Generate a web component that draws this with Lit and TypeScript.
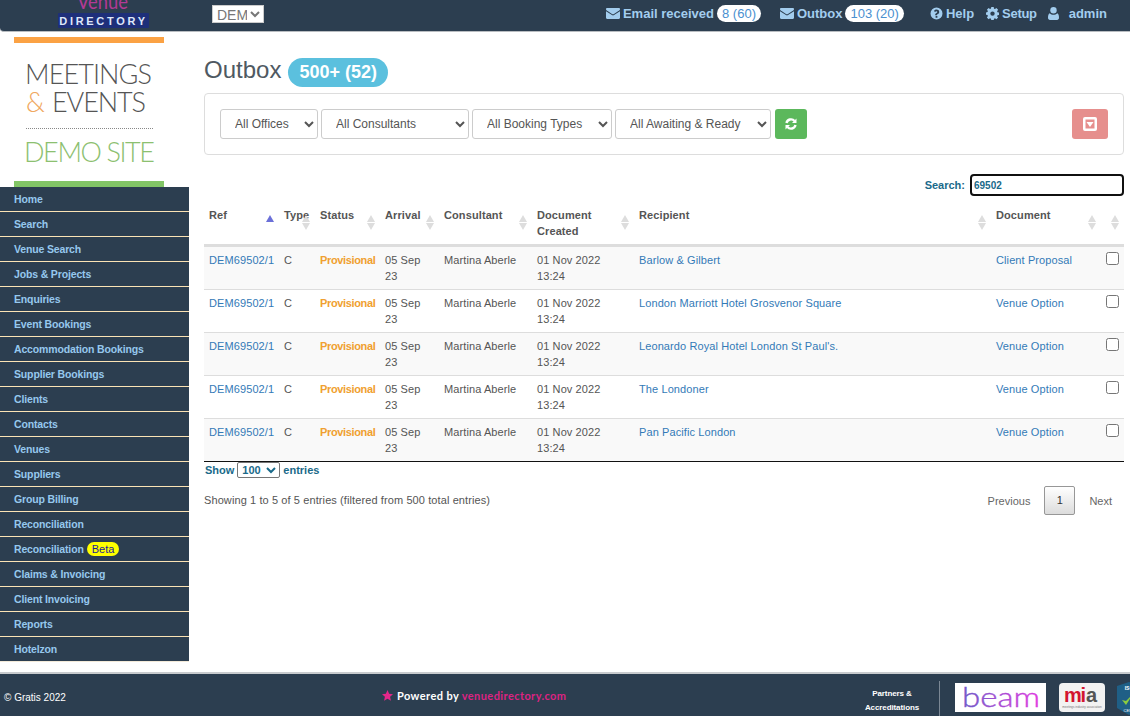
import { LitElement, html, css, svg } from 'lit';
import { customElement } from 'lit/decorators.js';

const NAV = [
  'Home',
  'Search',
  'Venue Search',
  'Jobs & Projects',
  'Enquiries',
  'Event Bookings',
  'Accommodation Bookings',
  'Supplier Bookings',
  'Clients',
  'Contacts',
  'Venues',
  'Suppliers',
  'Group Billing',
  'Reconciliation',
  'Reconciliation|Beta',
  'Claims & Invoicing',
  'Client Invoicing',
  'Reports',
  'Hotelzon',
];

const ROWS = [
  ['Barlow & Gilbert', 'Client Proposal'],
  ['London Marriott Hotel Grosvenor Square', 'Venue Option'],
  ["Leonardo Royal Hotel London St Paul's.", 'Venue Option'],
  ['The Londoner', 'Venue Option'],
  ['Pan Pacific London', 'Venue Option'],
];

const envelope = html`<svg class="ico ico--env" viewBox="0 0 14 11">
  <path d="M0 1.2C0 .5.5 0 1.2 0h11.6c.7 0 1.2.5 1.2 1.2 0 .5-.3 1-.8 1.4L7.6 6.2c-.4.2-.8.2-1.2 0L.8 2.6C.3 2.2 0 1.700 0 1.2z" />
  <path d="M0 3.2l6 3.9c.6.4 1.4.4 2 0l6-3.9v6.6c0 .7-.5 1.2-1.2 1.2H1.2C.5 11 0 10.500 0 9.800z" />
</svg>`;

const gear = svg`<path fill-rule="evenodd" d="M5.300 0h2.400l.3 1.700 1 .4L10.400 1.100l1.700 1.700-1 1.400.4 1 1.500.3v2.400l-1.500.3-.4 1 1 1.400-1.700 1.700-1.400-1-1 .4-.3 1.700H5.300l-.3-1.700-1-.4-1.400 1L.9 10.500l1-1.400-.4-1L0 7.800V5.400l1.500-.3.400-1-1-1.400 1.700-1.700 1.400 1 1-.4zM6.500 4.400a2.200 2.200 0 1 0 0 4.400 2.200 2.200 0 0 0 0-4.400z" />`;

@customElement('app-root')
export class AppRoot extends LitElement {
  static styles = css`
    :host {
      display: flex;
      flex-direction: column;
      height: 716px;
      overflow: hidden;
      background: #fff;
      color: #555;
      font-family: 'Liberation Sans', Arial, sans-serif;
      font-size: 11px;
    }

    a {
      color: #337ab7;
      text-decoration: none;
    }

    .top {
      flex: none;
      display: flex;
      align-items: center;
      height: 31px;
      background: #2c3e50;
      border-bottom: 1px solid #b9bdc1;
      border-bottom-left-radius: 4px;
      overflow: hidden;
    }

    .top__logo {
      display: block;
      width: 100px;
      height: 31px;
      margin-left: 55px;
    }

    .top__select {
      margin-left: 57px;
      width: 52px;
      height: 18px;
      padding: 0;
      margin-top: -3px;
      border: 1px solid #ccc;
      border-radius: 0;
      background: #fff;
      color: #777;
      font: 14px 'Liberation Sans', Arial, sans-serif;
    }

    .top__nav {
      display: flex;
      align-items: center;
      margin-left: auto;
      margin-right: 23px;
      margin-top: -4px;
      color: #a3cdee;
      font-size: 13px;
      font-weight: bold;
    }

    .top__item {
      display: flex;
      align-items: center;
      gap: 3px;
    }

    .top__item--mail {
      margin-right: 19px;
    }

    .top__item--help {
      margin-left: 26px;
      margin-right: 12px;
    }

    .top__item--setup {
      margin-right: 11px;
      letter-spacing: -0.3px;
    }

    .top__item--user {
      gap: 10px;
    }

    .top__count {
      padding: 0 5px;
      height: 17px;
      line-height: 17px;
      border-radius: 9px;
      background: #fff;
      color: #4a90d0;
      font-weight: normal;
      font-size: 13px;
    }

    .ico {
      display: block;
      fill: #a3cdee;
    }

    .ico--env {
      width: 14px;
      height: 11px;
    }

    .ico--small {
      width: 13px;
      height: 13px;
    }

    .ico--user {
      width: 11px;
      height: 13px;
    }

    .body {
      flex: 1;
      display: flex;
      min-height: 0;
    }

    .side {
      flex: none;
      width: 189px;
    }

    .side__logo {
      display: block;
      width: 150px;
      height: 150px;
      margin: 5px 0 0 14px;
    }

    .side__nav {
      display: flex;
      flex-direction: column;
      background: #2c3e50;
    }

    .side__link {
      display: flex;
      align-items: center;
      gap: 3px;
      height: 24px;
      padding-left: 14px;
      border-bottom: 1px solid #fbe3b5;
      color: #96c8ee;
      font-size: 10.5px;
      font-weight: bold;
      letter-spacing: -0.15px;
    }

    .side__link:last-child {
      border-bottom-color: #f3ead9;
    }

    .side__beta {
      padding: 0 5px;
      height: 14px;
      line-height: 14px;
      border-radius: 7px;
      background: #ff0;
      color: #1c1c9a;
      font-size: 11px;
      font-weight: normal;
      letter-spacing: 0;
    }

    .main {
      flex: 1;
      min-width: 0;
      padding: 0 6px 0 15px;
    }

    .title {
      display: flex;
      align-items: flex-start;
      gap: 7px;
      height: 29px;
      margin: 26px 0 6px 0;
      color: #4f5962;
      font-size: 24px;
      line-height: 24px;
      font-weight: normal;
    }

    .title__badge {
      padding: 0 11px;
      height: 29px;
      line-height: 29px;
      border-radius: 15px;
      background: #5bc0de;
      color: #fff;
      font-size: 18px;
      font-weight: bold;
    }

    .filters {
      display: flex;
      align-items: center;
      gap: 3px;
      height: 60px;
      padding: 0 15px;
      border: 1px solid #ddd;
      border-radius: 4px;
    }

    .filters__select {
      height: 30px;
      padding: 0 10px;
      border: 1px solid #ccc;
      border-radius: 3px;
      background: #fff;
      color: #555;
      font: 12px 'Liberation Sans', Arial, sans-serif;
    }

    .filters__select--offices {
      width: 98px;
    }

    .filters__select--consultants {
      width: 148px;
    }

    .filters__select--types {
      width: 140px;
    }

    .filters__select--ready {
      width: 156px;
    }

    .btn {
      display: flex;
      align-items: center;
      justify-content: center;
      height: 30px;
      border-radius: 3px;
    }

    .btn--go {
      width: 32px;
      margin-left: 1px;
      background: #5cb85c;
    }

    .btn--export {
      width: 36px;
      margin-left: auto;
      background: #e68f8d;
    }

    .search {
      display: flex;
      align-items: center;
      justify-content: flex-end;
      gap: 5px;
      margin-top: 19px;
      margin-bottom: 5px;
      color: #1a6a8a;
      font-weight: bold;
    }

    .search__input {
      box-sizing: border-box;
      width: 154px;
      height: 22px;
      padding: 0 2px;
      border: 2px solid #101010;
      border-radius: 4px;
      outline: none;
      color: #1a6a8a;
      font: bold 10px 'Liberation Sans', Arial, sans-serif;
    }

    .grid {
      width: 920px;
      table-layout: fixed;
      border-collapse: collapse;
      border-bottom: 1px solid #111;
      line-height: 16px;
    }

    .grid th {
      position: relative;
      box-sizing: border-box;
      height: 44px;
      padding: 6px 5px 5px 5px;
      border-bottom: 3px solid #ddd;
      text-align: left;
      vertical-align: top;
      font-weight: bold;
      letter-spacing: 0.1px;
    }

    .grid td {
      padding: 5px;
      border-bottom: 1px solid #ddd;
      vertical-align: top;
      letter-spacing: 0.1px;
    }

    .grid tr:last-child td {
      border-bottom: none;
    }

    .grid tbody tr:nth-child(odd) td {
      background: #f9f9f9;
    }

    .grid .provisional {
      color: #f0a030;
      font-weight: bold;
      letter-spacing: -0.35px;
    }

    .col-ref { width: 75px; }
    .col-type { width: 36px; }
    .col-status { width: 65px; }
    .col-arrival { width: 59px; }
    .col-consultant { width: 93px; }
    .col-created { width: 102px; }
    .col-recipient { width: 357px; }
    .col-document { width: 110px; }
    .col-check { width: 23px; }

    .sort {
      position: absolute;
      right: 5px;
      top: 14px;
      display: flex;
      flex-direction: column;
      gap: 1px;
    }

    .sort__up,
    .sort__down {
      width: 0;
      height: 0;
      border-left: 4.500px solid transparent;
      border-right: 4.500px solid transparent;
    }

    .sort__up {
      border-bottom: 7px solid #ddd;
    }

    .sort__down {
      border-top: 7px solid #ddd;
    }

    .sort--active .sort__up {
      border-bottom-color: #6b70d8;
    }

    .sort--active .sort__down {
      visibility: hidden;
    }

    .check {
      display: block;
      width: 13px;
      height: 13px;
      margin: 0;
      appearance: none;
      box-sizing: border-box;
      border: 1px solid #767676;
      border-radius: 2.500px;
      background: #fff;
    }

    .length {
      display: flex;
      align-items: center;
      gap: 3px;
      height: 16px;
      padding-left: 1px;
      color: #1a6a8a;
      font-weight: bold;
    }

    .length__select {
      width: 43px;
      height: 16px;
      padding: 0;
      border: 1px solid #767676;
      border-radius: 2px;
      background: #fff;
      color: #1a6a8a;
      font: bold 11px 'Liberation Sans', Arial, sans-serif;
    }

    .tail {
      display: flex;
      align-items: center;
      justify-content: space-between;
      margin-top: 8px;
      letter-spacing: 0.1px;
    }

    .tail__info {
      margin-top: -2px;
    }

    .tail__pages {
      display: flex;
      align-items: center;
      gap: 14px;
      margin-right: 12px;
      color: #666;
      letter-spacing: 0;
    }

    .tail__current {
      width: 31px;
      height: 29px;
      box-sizing: border-box;
      line-height: 27px;
      text-align: center;
      border: 1px solid #979797;
      border-radius: 2px;
      background: linear-gradient(#fff, #dcdcdc);
      color: #333;
    }

    .foot {
      flex: none;
      display: flex;
      align-items: center;
      height: 42px;
      background: #2c3e50;
      border-top: 2px solid #c8cbce;
      overflow: hidden;
      color: #fff;
    }

    .foot__copy {
      width: 382px;
      flex: none;
      box-sizing: border-box;
      padding-left: 4px;
      margin-top: 4px;
      font-size: 10px;
    }

    .foot__power {
      width: 466px;
      flex: none;
      display: flex;
      align-items: center;
      gap: 4px;
      font-family: 'Lato', sans-serif;
      font-size: 11px;
      font-weight: 700;
      letter-spacing: 0.42px;
    }

    .foot__brand {
      color: #dc2382;
    }

    .foot__star {
      display: block;
      width: 11px;
      height: 11px;
      fill: #e5278a;
    }

    .foot__partners {
      flex: none;
      width: 88px;
      margin: 12px 3px 0 0;
      text-align: center;
      font-size: 8px;
      line-height: 14px;
      font-weight: bold;
      letter-spacing: -0.1px;
    }

    .foot__rule {
      flex: none;
      align-self: stretch;
      width: 1px;
      margin-top: 7px;
      background: #7b8794;
    }

    .foot__beam {
      flex: none;
      display: block;
      width: 91px;
      height: 29px;
      margin: 5px 0 0 15px;
      background: #fff;
    }

    .foot__mia {
      flex: none;
      display: block;
      width: 46px;
      height: 29px;
      margin: 5px 0 0 13px;
      border-radius: 4px;
      background: #f2f2f2;
    }

    .foot__mark {
      flex: none;
      display: block;
      width: 24px;
      height: 36px;
      margin: 6px 0 0 12px;
    }
  `;

  renderTop() {
    return html`
      <header class="top">
        <svg class="top__logo" viewBox="0 0 100 31">
          <text x="47.500" y="9" text-anchor="middle" fill="#b23a94" font-family="Lato, sans-serif" font-size="22" textLength="51" lengthAdjust="spacingAndGlyphs">Venue</text>
          <rect x="3" y="13" width="91" height="15" rx="1" fill="#1e2f7a" />
          <text x="48.500" y="25" text-anchor="middle" fill="#dfe7fb" font-family="'Liberation Sans', sans-serif" font-size="11" font-weight="bold" letter-spacing="2.700">DIRECTORY</text>
        </svg>
        <select class="top__select"><option>DEM</option></select>
        <nav class="top__nav">
          <span class="top__item top__item--mail">
            ${envelope}Email received<span class="top__count">8 (60)</span>
          </span>
          <span class="top__item">
            ${envelope}Outbox<span class="top__count">103 (20)</span>
          </span>
          <span class="top__item top__item--help">
            <svg class="ico ico--small" viewBox="0 0 13 13">
              <path fill-rule="evenodd" d="M6.500.5a6 6 0 1 1 0 12 6 6 0 0 1 0-12zM5.600 9v1.800h1.800V9zM6.600 2.600c-1.300 0-2.200.6-2.700 1.500l1.200.9c.4-.5.700-.8 1.300-.8.500 0 .9.300.9.700 0 .5-.3.700-.8 1-.6.300-1.300.8-1.300 1.700v.6h1.800c0-.5.200-.7.800-1.100.7-.4 1.400-1 1.400-2.200 0-1.600-1.300-2.300-2.600-2.300z" />
            </svg>
            Help
          </span>
          <span class="top__item top__item--setup">
            <svg class="ico ico--small" viewBox="0 0 13 13">${gear}</svg>
            Setup
          </span>
          <span class="top__item top__item--user">
            <svg class="ico ico--user" viewBox="0 0 11 13">
              <circle cx="5.500" cy="3.200" r="3.200" />
              <path d="M1.800 6.300c1 1 2.300 1.500 3.700 1.500s2.700-.5 3.700-1.500c1.200.4 1.800 2 1.800 4.500 0 1.300-.8 2.200-2 2.200H2c-1.200 0-2-.9-2-2.200 0-2.500.6-4.100 1.800-4.500z" />
            </svg>
            admin
          </span>
        </nav>
      </header>
    `;
  }

  renderSide() {
    return html`
      <aside class="side">
        <svg class="side__logo" viewBox="0 0 150 150">
          <rect width="150" height="6" fill="#fba244" />
          <rect y="144" width="150" height="6" fill="#82c566" />
          <text x="11" y="47" fill="#555" font-family="Lato, sans-serif" font-size="27" font-weight="300" textLength="127">MEETINGS</text>
          <text x="12" y="75" fill="#f0a860" font-family="Lato, sans-serif" font-size="27" font-weight="300">&amp;</text>
          <text x="38" y="75" fill="#555" font-family="Lato, sans-serif" font-size="27" font-weight="300" textLength="94">EVENTS</text>
          <line x1="12" y1="91.500" x2="140" y2="91.500" stroke="#888" stroke-dasharray="1 1" />
          <text x="10" y="125" fill="#8cc070" font-family="Lato, sans-serif" font-size="27" font-weight="300" textLength="131">DEMO SITE</text>
        </svg>
        <nav class="side__nav">
          ${NAV.map((item) => {
            const [label, tag] = item.split('|');
            return html`<a class="side__link" href="#">
              ${label}${tag ? html`<span class="side__beta">${tag}</span>` : ''}
            </a>`;
          })}
        </nav>
      </aside>
    `;
  }

  renderSort(active = false) {
    return html`<span class="sort ${active ? 'sort--active' : ''}">
      <span class="sort__up"></span><span class="sort__down"></span>
    </span>`;
  }

  renderTable() {
    return html`
      <table class="grid">
        <thead>
          <tr>
            <th class="col-ref">Ref${this.renderSort(true)}</th>
            <th class="col-type">Type${this.renderSort()}</th>
            <th class="col-status">Status${this.renderSort()}</th>
            <th class="col-arrival">Arrival${this.renderSort()}</th>
            <th class="col-consultant">Consultant${this.renderSort()}</th>
            <th class="col-created">Document<br />Created${this.renderSort()}</th>
            <th class="col-recipient">Recipient${this.renderSort()}</th>
            <th class="col-document">Document${this.renderSort()}</th>
            <th class="col-check">${this.renderSort()}</th>
          </tr>
        </thead>
        <tbody>
          ${ROWS.map(
            ([recipient, doc]) => html`
              <tr>
                <td><a href="#">DEM69502/1</a></td>
                <td>C</td>
                <td class="provisional">Provisional</td>
                <td>05 Sep<br />23</td>
                <td>Martina Aberle</td>
                <td>01 Nov 2022<br />13:24</td>
                <td><a href="#">${recipient}</a></td>
                <td><a href="#">${doc}</a></td>
                <td><input class="check" type="checkbox" /></td>
              </tr>
            `
          )}
        </tbody>
      </table>
    `;
  }

  renderMain() {
    return html`
      <main class="main">
        <h1 class="title">Outbox <span class="title__badge">500+ (52)</span></h1>
        <section class="filters">
          <select class="filters__select filters__select--offices"><option>All Offices</option></select>
          <select class="filters__select filters__select--consultants"><option>All Consultants</option></select>
          <select class="filters__select filters__select--types"><option>All Booking Types</option></select>
          <select class="filters__select filters__select--ready"><option>All Awaiting &amp; Ready</option></select>
          <span class="btn btn--go">
            <svg width="12" height="12" viewBox="0 0 12 12" fill="none" stroke="#fff" stroke-width="2.400">
              <path d="M1.500 5a4.600 4.600 0 0 1 8-2" />
              <path d="M10.500 7a4.600 4.600 0 0 1-8 2" />
              <path d="M11.500 .5v4.500H7z" fill="#fff" stroke="none" />
              <path d="M.5 11.500V7H5z" fill="#fff" stroke="none" />
            </svg>
          </span>
          <span class="btn btn--export">
            <svg width="14" height="14" viewBox="0 0 14 14">
              <path fill="#fff" fill-rule="evenodd" d="M2 0h10a2 2 0 0 1 2 2v10a2 2 0 0 1-2 2H2a2 2 0 0 1-2-2V2a2 2 0 0 1 2-2zM2.500 2.500v9h9v-9z" />
              <path fill="#fff" d="M3.500 5h7L7 10z" />
            </svg>
          </span>
        </section>
        <label class="search">
          Search:
          <input class="search__input" .value=${'69502'} />
        </label>
        ${this.renderTable()}
        <div class="length">
          Show
          <select class="length__select"><option>100</option></select>
          entries
        </div>
        <div class="tail">
          <span class="tail__info">Showing 1 to 5 of 5 entries (filtered from 500 total entries)</span>
          <span class="tail__pages">
            Previous
            <span class="tail__current">1</span>
            Next
          </span>
        </div>
      </main>
    `;
  }

  renderFoot() {
    return html`
      <footer class="foot">
        <span class="foot__copy">© Gratis 2022</span>
        <span class="foot__power">
          <svg class="foot__star" viewBox="0 0 24 24">
            <path d="M12 0l3.500 8.200 8.500.8-6.400 5.800 1.900 8.700L12 19l-7.500 4.500 1.900-8.700L0 9l8.500-.8z" />
          </svg>
          <span>Powered by <span class="foot__brand">venuedirectory.com</span></span>
        </span>
        <span class="foot__partners">Partners &amp;<br />Accreditations</span>
        <span class="foot__rule"></span>
        <svg class="foot__beam" viewBox="0 0 91 29">
          <defs>
            <linearGradient id="beam" x1="0" x2="1" y1="0" y2="0">
              <stop offset="0" stop-color="#6f5bc8" />
              <stop offset="1" stop-color="#e03be0" />
            </linearGradient>
          </defs>
          <text x="7" y="24" fill="url(#beam)" stroke="url(#beam)" stroke-width="0.4" font-family="Lato, sans-serif" font-size="28" font-weight="300" textLength="78" lengthAdjust="spacingAndGlyphs">beam</text>
        </svg>
        <svg class="foot__mia" viewBox="0 0 46 29">
          <text x="5" y="19" fill="#d3152f" font-family="'Liberation Sans', sans-serif" font-size="20" font-weight="bold" textLength="22">mi</text>
          <text x="27" y="19" fill="#555" font-family="'Liberation Sans', sans-serif" font-size="20" font-weight="bold">a</text>
          <text x="23" y="25" text-anchor="middle" fill="#777" font-family="'Liberation Sans', sans-serif" font-size="3">meetings industry association</text>
        </svg>
        <svg class="foot__mark" viewBox="0 0 24 36">
          <path d="M0 6l12-4 12 4v22l-12 7-12-7z" fill="#1f5f86" />
          <path d="M5 20l4 5 7-11-7 7z" fill="#8ccb3f" />
          <text x="12" y="10" text-anchor="middle" fill="#fff" font-family="'Liberation Sans', sans-serif" font-size="5" font-weight="bold">ISO</text>
          <text x="12" y="32" text-anchor="middle" fill="#fff" font-family="'Liberation Sans', sans-serif" font-size="4">CERT</text>
        </svg>
      </footer>
    `;
  }

  render() {
    return html`
      ${this.renderTop()}
      <div class="body">${this.renderSide()}${this.renderMain()}</div>
      ${this.renderFoot()}
    `;
  }
}
